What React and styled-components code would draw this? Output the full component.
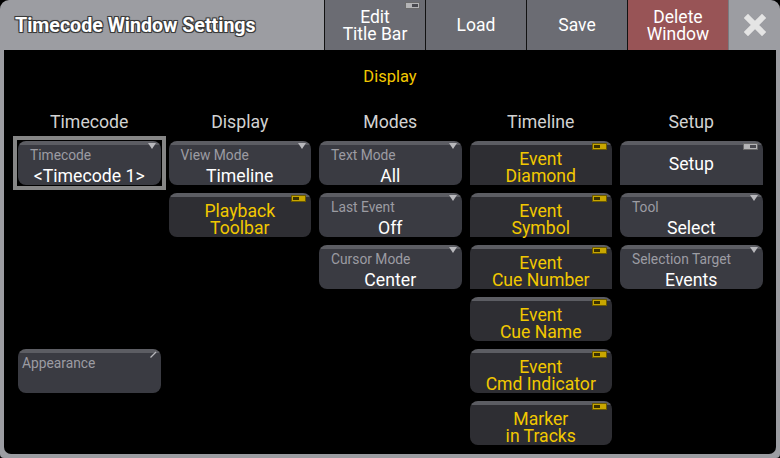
import React from "react";
import styled, { createGlobalStyle } from "styled-components";

const Global = createGlobalStyle`
  html, body {
    margin: 0;
    padding: 0;
    background: #000;
    font-family: Roboto, "Liberation Sans", sans-serif;
  }
`;

const Window = styled.div`
  width: 780px;
  height: 458px;
  background: #9c9da2;
  border-radius: 9px 9px 4px 4px;
  display: flex;
  flex-direction: column;
  overflow: hidden;
`;

const TitleBar = styled.div`
  height: 50px;
  display: flex;
  align-items: stretch;
`;

const Title = styled.div`
  width: 324px;
  flex: none;
  box-sizing: border-box;
  padding-left: 15px;
  display: flex;
  align-items: center;
  white-space: nowrap;
  color: #fff;
  font-weight: 700;
  font-size: 19.6px;
  text-shadow: -1px -1px 0 #3a3a3a, 1px -1px 0 #3a3a3a, -1px 1px 0 #3a3a3a,
    1px 1px 0 #3a3a3a, 0 0 2px #222;
`;

const HeadButton = styled.div`
  position: relative;
  width: 101px;
  flex: none;
  box-sizing: border-box;
  border-left: 1px solid #121212;
  background: ${(p) => (p.$danger ? "#985456" : "#6b6c73")};
  color: #fff;
  font-size: 17.5px;
  line-height: 17px;
  padding-top: 1px;
  display: flex;
  align-items: center;
  justify-content: center;
  text-align: center;
`;

const CloseButton = styled.div`
  flex: 1;
  border-left: 1px solid #7a7b80;
  display: flex;
  align-items: center;
  justify-content: center;
`;

const Content = styled.div`
  flex: 1;
  margin: 0 4px 4px;
  background: #000;
  border-radius: 0 0 7px 7px;
  padding: 0 10px;
`;

const SectionTitle = styled.div`
  height: 53px;
  line-height: 54px;
  text-align: center;
  color: #f2c800;
  font-size: 16.5px;
`;

const Grid = styled.div`
  display: grid;
  grid-template-columns: repeat(5, 150.5px);
  grid-template-rows: 30px repeat(6, 44px);
  row-gap: 8px;
`;

const ColHead = styled.div`
  grid-row: 1;
  text-align: center;
  color: #d2d2d2;
  font-size: 17.7px;
  line-height: 20px;
  padding-top: 9px;
`;

const Cell = styled.div`
  grid-column: ${(p) => p.$col};
  grid-row: ${(p) => p.$row + 1};
  padding: 0 4px;
  display: flex;
`;

const Frame = styled.div`
  flex: 1;
  margin: -5px;
  border: 4px solid #868686;
  padding: 1px;
  display: flex;
`;

const Button = styled.div`
  position: relative;
  flex: 1;
  border-radius: ${(p) => (p.$square ? "8px 8px 0 0" : "8px")};
  background: linear-gradient(
    #5c5d63 0 4px,
    ${(p) => (p.$toggle ? "#2e2e33" : "#3a3b42")} 4px
  );
  display: flex;
  flex-direction: column;
  padding-top: ${(p) => p.$pad ?? 6}px;
  box-sizing: border-box;
`;

const Label = styled.div`
  height: 16px;
  line-height: 16px;
  padding-left: ${(p) => (p.$left ? 4 : 12)}px;
  color: #9c9ca2;
  font-size: 13.8px;
  white-space: nowrap;
`;

const Value = styled.div`
  margin-top: 3px;
  text-align: center;
  color: #fff;
  font-size: 17.7px;
  line-height: 20px;
`;

const Center = styled.div`
  flex: 1;
  display: flex;
  align-items: center;
  justify-content: center;
  text-align: center;
  color: ${(p) => (p.$yellow ? "#f2c800" : "#fff")};
  font-size: 17.6px;
  line-height: 17px;
`;

const Indicator = styled.div`
  position: absolute;
  top: 2px;
  right: 5px;
  width: 15px;
  height: 7px;
  box-sizing: border-box;
  border: 1px solid ${(p) => (p.$on ? "#6b5a00" : "#6a6a6a")};
  background: ${(p) => (p.$on ? "#c8a600" : "#b4b4b6")};
  &::after {
    content: "";
    position: absolute;
    top: 1px;
    ${(p) => (p.$on ? "left: 1px;" : "right: 1px;")}
    width: 6px;
    height: 3px;
    background: ${(p) => (p.$on ? "#3a3100" : "#4a4a50")};
  }
`;

const Triangle = styled.div`
  position: absolute;
  top: 2px;
  right: 5px;
  width: 0;
  height: 0;
  border-left: 4px solid transparent;
  border-right: 4px solid transparent;
  border-top: 6px solid #b8b8bc;
`;

const EditMark = styled.svg`
  position: absolute;
  top: 2px;
  right: 4px;
`;

const CloseIcon = () => (
  <svg width="22" height="22" viewBox="0 0 22 22">
    <path d="M4 4 L18 18 M18 4 L4 18" stroke="#e4e4e4" strokeWidth="6" strokeLinecap="square" />
  </svg>
);

const Select = ({ label, value }) => (
  <Button>
    <Triangle />
    <Label>{label}</Label>
    <Value>{value}</Value>
  </Button>
);

const Toggle = ({ children, square }) => (
  <Button $toggle $square={square} $pad={9}>
    <Indicator $on />
    <Center $yellow>{children}</Center>
  </Button>
);

const columns = ["Timecode", "Display", "Modes", "Timeline", "Setup"];

export default function App() {
  return (
    <>
      <Global />
      <Window>
        <TitleBar>
          <Title>Timecode Window Settings</Title>
          <HeadButton>
            <Indicator />
            Edit
            <br />
            Title Bar
          </HeadButton>
          <HeadButton>Load</HeadButton>
          <HeadButton>Save</HeadButton>
          <HeadButton $danger>
            Delete
            <br />
            Window
          </HeadButton>
          <CloseButton>
            <CloseIcon />
          </CloseButton>
        </TitleBar>
        <Content>
          <SectionTitle>Display</SectionTitle>
          <Grid>
            {columns.map((c) => (
              <ColHead key={c}>{c}</ColHead>
            ))}

            <Cell $col={1} $row={1}>
              <Frame>
                <Select label="Timecode" value="<Timecode 1>" />
              </Frame>
            </Cell>
            <Cell $col={1} $row={5}>
              <Button>
                <EditMark width="8" height="8" viewBox="0 0 8 8">
                  <path d="M7 1 L1.5 6.5" stroke="#b8b8bc" strokeWidth="1.2" />
                </EditMark>
                <Label $left>Appearance</Label>
              </Button>
            </Cell>

            <Cell $col={2} $row={1}>
              <Select label="View Mode" value="Timeline" />
            </Cell>
            <Cell $col={2} $row={2}>
              <Toggle>
                Playback
                <br />
                Toolbar
              </Toggle>
            </Cell>

            <Cell $col={3} $row={1}>
              <Select label="Text Mode" value="All" />
            </Cell>
            <Cell $col={3} $row={2}>
              <Select label="Last Event" value="Off" />
            </Cell>
            <Cell $col={3} $row={3}>
              <Select label="Cursor Mode" value="Center" />
            </Cell>

            <Cell $col={4} $row={1}>
              <Toggle square>
                Event
                <br />
                Diamond
              </Toggle>
            </Cell>
            <Cell $col={4} $row={2}>
              <Toggle square>
                Event
                <br />
                Symbol
              </Toggle>
            </Cell>
            <Cell $col={4} $row={3}>
              <Toggle square>
                Event
                <br />
                Cue Number
              </Toggle>
            </Cell>
            <Cell $col={4} $row={4}>
              <Toggle>
                Event
                <br />
                Cue Name
              </Toggle>
            </Cell>
            <Cell $col={4} $row={5}>
              <Toggle>
                Event
                <br />
                Cmd Indicator
              </Toggle>
            </Cell>
            <Cell $col={4} $row={6}>
              <Toggle>
                Marker
                <br />
                in Tracks
              </Toggle>
            </Cell>

            <Cell $col={5} $row={1}>
              <Button $square $pad={2}>
                <Indicator />
                <Center>Setup</Center>
              </Button>
            </Cell>
            <Cell $col={5} $row={2}>
              <Select label="Tool" value="Select" />
            </Cell>
            <Cell $col={5} $row={3}>
              <Select label="Selection Target" value="Events" />
            </Cell>
          </Grid>
        </Content>
      </Window>
    </>
  );
}
